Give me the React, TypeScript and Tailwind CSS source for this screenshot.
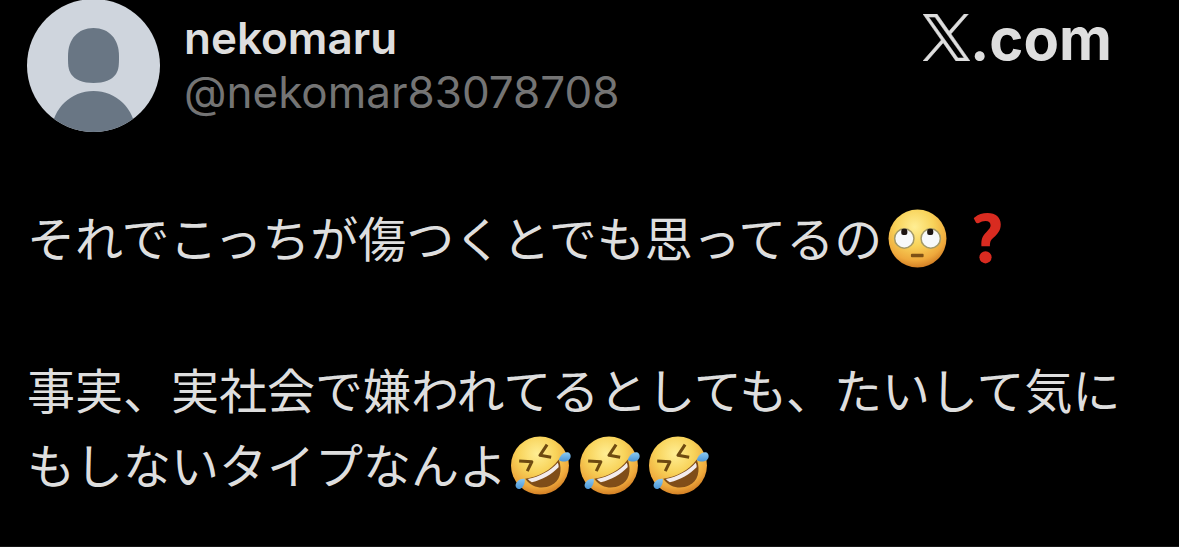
import type { ReactNode } from 'react';

const author = {
  name: 'nekomaru',
  handle: '@nekomar83078708',
};

const Avatar = () => (
  <svg viewBox="0 0 133 133" className="-mt-px size-[133px] shrink-0" role="img" aria-label={author.name}>
    <defs>
      <clipPath id="avatar-clip">
        <circle cx="66.5" cy="66.5" r="66.5" />
      </clipPath>
    </defs>
    <g clipPath="url(#avatar-clip)">
      <rect width="133" height="133" fill="#cfd5dd" />
      <path
        d="M66.5 29C82 29 92 40 92 57c0 8 0 13-3 18-4 6-12 9-22.500 9S48 81 44 75c-3-5-3-10-3-18 0-17 10-28 25.500-28Z"
        fill="#697684"
      />
      <path d="M24 133c2-24 20-41 42.500-41S107 109 109 133Z" fill="#697684" />
    </g>
  </svg>
);

const XLogo = () => (
  <svg viewBox="0 0 24 24" className="size-[47px]" fill="currentColor" stroke="currentColor" strokeWidth="0.3" aria-hidden="true">
    <path d="M14.258 10.152L23.176 0h-2.113l-7.747 8.813L7.133 0H0l9.352 13.328L0 23.973h2.113l8.176-9.309 6.531 9.309h7.133zm-2.895 3.293l-.949-1.328L2.875 1.56h3.246l6.086 8.523.945 1.328 7.91 11.078h-3.246z" />
  </svg>
);

const Emoji = ({ label, children }: { label: string; children: ReactNode }) => (
  <svg viewBox="0 0 60 60" className="mx-1 inline-block size-[61px] align-[-12px]" role="img" aria-label={label}>
    {children}
  </svg>
);

const EmojiDefs = () => (
  <svg className="absolute size-0" aria-hidden="true">
    <defs>
      <radialGradient id="face" cx="0.45" cy="0.3" r="0.72">
        <stop offset="0" stopColor="#ffee94" />
        <stop offset="0.45" stopColor="#f8d35a" />
        <stop offset="0.8" stopColor="#efa93c" />
        <stop offset="1" stopColor="#cf7a22" />
      </radialGradient>
      <linearGradient id="tear" x1="0" y1="0" x2="0" y2="1">
        <stop offset="0" stopColor="#8cc9f0" />
        <stop offset="1" stopColor="#4b96d6" />
      </linearGradient>
    </defs>
  </svg>
);

const RollingEyes = () => (
  <Emoji label="🙄">
    <circle cx="31" cy="30" r="28.500" fill="url(#face)" />
    <circle cx="18" cy="30" r="9.500" fill="#f7f9fa" stroke="#a49a68" strokeWidth="1.500" />
    <circle cx="44" cy="30" r="9.500" fill="#f7f9fa" stroke="#a49a68" strokeWidth="1.500" />
    <rect x="15" y="20.500" width="6" height="6" rx="2" fill="#1c1512" />
    <rect x="40.500" y="20.500" width="6" height="6" rx="2" fill="#1c1512" />
    <rect x="24.500" y="45" width="12.500" height="3.500" rx="1" fill="#7d5015" />
  </Emoji>
);

const QuestionMark = () => (
  <Emoji label="❓">
    <path
      d="M19.500 9C23 6.500 27 5 32 5c8 0 13 4.500 13 11 0 6-3 9.500-7 13-3 2.500-3.500 4-3.700 8.500H26c-.3-7 .8-10 5-14 3-3 4-4.500 4-6.500 0-3-2-4.300-5-4.300-2.500 0-4.500.8-6.500 2-1.500.8-2.500.4-3.200-.9l-1.500-3c-.5-.8-.3-1.300.7-1.800Z"
      fill="#d92b20"
    />
    <circle cx="30" cy="48.500" r="6" fill="#d92b20" />
  </Emoji>
);

const Rofl = () => (
  <Emoji label="🤣">
    <circle cx="28.500" cy="30" r="28.500" fill="url(#face)" />
    <path
      d="M35.500 9.500L28.500 20l11 2M8 25.500l12.500.8L16 35.500"
      fill="none"
      stroke="#6e4a10"
      strokeWidth="3"
      strokeLinejoin="round"
    />
    <path d="M14 43c13-2 25-8 33-19 4 11 1 21.500-7.500 25.500-8 4-18.500 3-25.500-6.500Z" fill="#7f4d18" />
    <path d="M16.500 43.200c11.500-2.200 22-8 29.500-16 .8 1.800 1 3 .8 4.500C40 38.500 31 44 20.500 46.500c-1.700-1-3-2-4-3.300Z" fill="#f3ecec" />
    <path d="M47 24.500c1-4 5-8.500 9-7.500 3.500 1 3.500 6 .7 7.800-3 2-7.200 1.700-9.700-.3Z" fill="url(#tear)" />
    <path d="M13.500 43c-5-.5-9 3-9 7 .3 3.500 4.500 4 6.700 1.300 2-2.300 2.800-5.300 2.300-8.300Z" fill="url(#tear)" />
  </Emoji>
);

export default function App() {
  return (
    <div className="min-h-screen border-b border-[#161616] bg-black font-['Inter','Noto_Sans_CJK_JP',sans-serif] text-[#dedede]">
      <EmojiDefs />
      <article className="px-[27px]">
        <header className="flex items-start">
          <Avatar />
          <div className="mt-[11px] ml-6 flex-1 text-[44px] leading-[54px]">
            <h1 className="font-semibold">{author.name}</h1>
            <p className="text-[#747474]">{author.handle}</p>
          </div>
          <div className="mt-[14px] mr-10 flex items-end">
            <XLogo />
            <span className="text-[58px] leading-[43px] font-bold">.com</span>
          </div>
        </header>

        <div className="mt-[67px] -mr-5 font-['Noto_Sans_CJK_JP',sans-serif] text-[48px] leading-[75px]" lang="ja">
          <p>
            それでこっちが傷つくとでも思ってるの
            <RollingEyes />
            <QuestionMark />
          </p>
          <p className="mt-[77px]">
            事実、実社会で嫌われてるとしても、たいして気に
            <br />
            もしないタイプなんよ
            <Rofl />
            <Rofl />
            <Rofl />
          </p>
        </div>
      </article>
    </div>
  );
}
